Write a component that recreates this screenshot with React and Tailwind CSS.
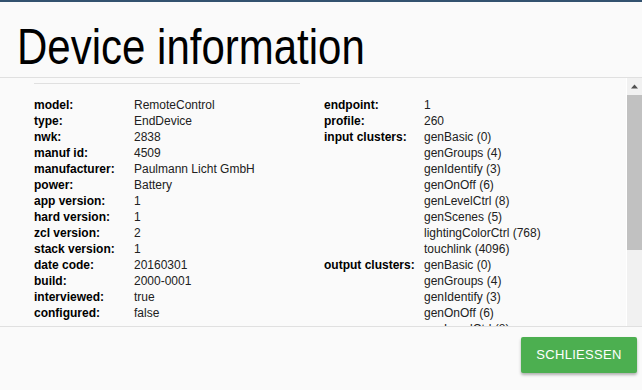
import React from "react";

const left = [
  ["model:", "RemoteControl"],
  ["type:", "EndDevice"],
  ["nwk:", "2838"],
  ["manuf id:", "4509"],
  ["manufacturer:", "Paulmann Licht GmbH"],
  ["power:", "Battery"],
  ["app version:", "1"],
  ["hard version:", "1"],
  ["zcl version:", "2"],
  ["stack version:", "1"],
  ["date code:", "20160301"],
  ["build:", "2000-0001"],
  ["interviewed:", "true"],
  ["configured:", "false"],
];

const right = [
  ["endpoint:", ["1"]],
  ["profile:", ["260"]],
  [
    "input clusters:",
    [
      "genBasic (0)",
      "genGroups (4)",
      "genIdentify (3)",
      "genOnOff (6)",
      "genLevelCtrl (8)",
      "genScenes (5)",
      "lightingColorCtrl (768)",
      "touchlink (4096)",
    ],
  ],
  [
    "output clusters:",
    [
      "genBasic (0)",
      "genGroups (4)",
      "genIdentify (3)",
      "genOnOff (6)",
      "genLevelCtrl (8)",
      "genScenes (5)",
      "lightingColorCtrl (768)",
      "touchlink (4096)",
    ],
  ],
];

export default function App() {
  return (
    <div
      className="w-[642px] h-[390px] bg-[#fafafa] flex flex-col overflow-hidden text-[#212121]"
      style={{ fontFamily: '"Liberation Sans", Arial, sans-serif' }}
    >
      <div className="h-[2px] bg-[#33526f] shrink-0" />
      <div className="h-[76px] shrink-0 border-b border-[#e0e0e0] pl-[17px] pt-[20px]">
        <h1
          className="text-[50px] leading-[50px] font-normal text-black whitespace-nowrap origin-left scale-x-[0.84]"
          style={{ fontFamily: '"Liberation Sans", Arial, sans-serif' }}
        >
          Device information
        </h1>
      </div>
      <div className="h-[248px] shrink-0 flex overflow-hidden">
        <div className="flex-1 overflow-hidden pt-[5px] pl-[34px]">
          <div className="flex text-[12px] leading-[16px]">
            <div className="w-[290px] shrink-0">
              <div className="w-[266px] h-px bg-[#e0e0e0] mb-[13px]" />
              {left.map(([k, v]) => (
                <div key={k} className="flex">
                  <div className="w-[100px] shrink-0 font-bold text-black">{k}</div>
                  <div>{v}</div>
                </div>
              ))}
            </div>
            <div className="pt-[14px]">
              {right.map(([k, vs]) => (
                <div key={k} className="flex">
                  <div className="w-[100px] shrink-0 font-bold text-black">{k}</div>
                  <div className="flex flex-col">
                    {vs.map((v) => (
                      <div key={v}>{v}</div>
                    ))}
                  </div>
                </div>
              ))}
            </div>
          </div>
        </div>
        <div className="w-[16px] shrink-0 border-l border-white bg-[#f1f1f1] flex flex-col">
          <div className="h-[17px] flex items-center justify-center">
            <svg width="7" height="5" viewBox="0 0 7 5">
              <path d="M0 4.5 L3.5 0.5 L7 4.5 Z" fill="#505050" />
            </svg>
          </div>
          <div className="h-[155px] bg-[#c1c1c1]" />
        </div>
      </div>
      <div className="flex-1 border-t border-[#e0e0e0] flex justify-end items-start pt-[10px] pr-[5px]">
        <button className="w-[116px] h-[36px] rounded-[2px] bg-[#4caf50] text-white text-[13px] tracking-[0.3px] shadow-[0_2px_3px_rgba(0,0,0,0.3)]">
          SCHLIESSEN
        </button>
      </div>
    </div>
  );
}
